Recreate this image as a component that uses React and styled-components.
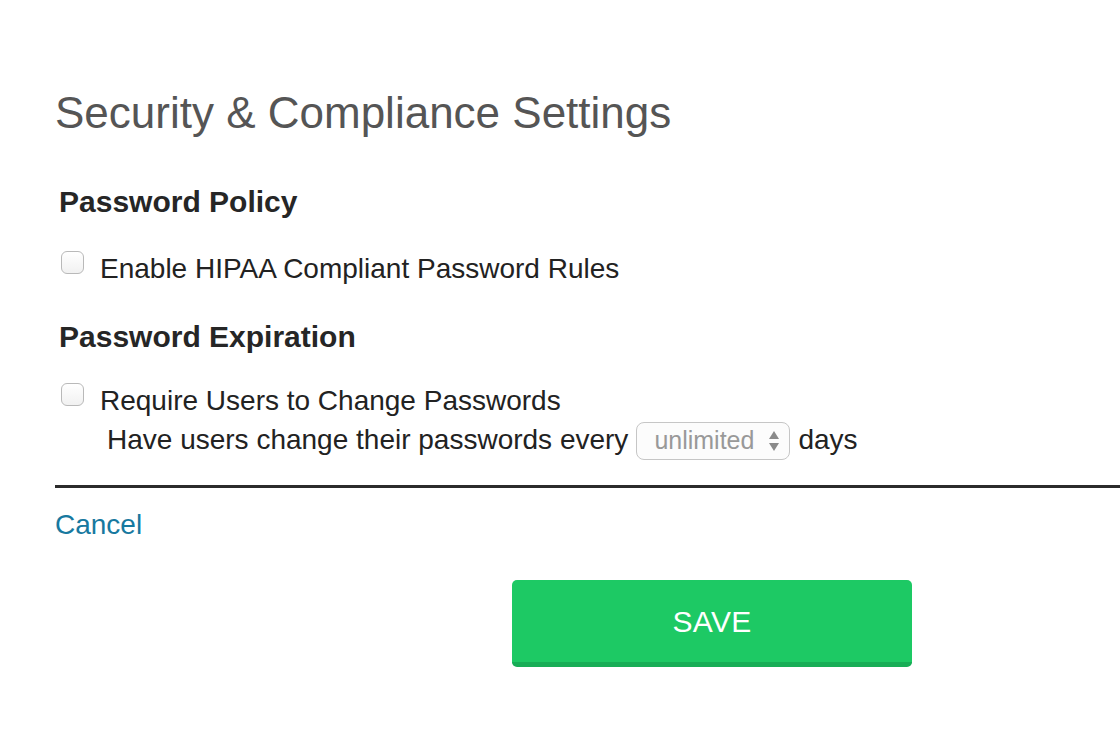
import React, { useState } from "react";
import styled, { createGlobalStyle } from "styled-components";

const GlobalStyle = createGlobalStyle`
    html, body {
        margin: 0;
        padding: 0;
        background: #ffffff;
        font-family: "Liberation Sans", Arial, Helvetica, sans-serif;
        overflow: hidden;
    }
`;

const Page = styled.div`
    width: 100%;
    height: 754px;
    padding-left: 55px;
    box-sizing: border-box;
    display: flex;
    flex-direction: column;
`;

const Title = styled.h1`
    margin: 87px 0 0;
    font-size: 44px;
    line-height: 1.2;
    font-weight: 400;
    color: #555555;
`;

const SectionTitle = styled.h2`
    margin: ${(p) => p.$top}px 0 0;
    padding-left: 4px;
    font-size: 30px;
    line-height: 1.2;
    font-weight: 700;
    color: #262626;
`;

const CheckRow = styled.label`
    margin-top: ${(p) => p.$top}px;
    display: flex;
    align-items: flex-start;
    gap: 16px;
    cursor: pointer;
`;

const Box = styled.input`
    appearance: none;
    -webkit-appearance: none;
    flex: none;
    width: 23px;
    height: 23px;
    margin: -1px 0 0 6px;
    border: 1px solid #b9b9b9;
    border-radius: 6px;
    background: linear-gradient(#ffffff, #f1f1f1);
    box-sizing: border-box;

    &:checked {
        background: #1a7aa0;
        border-color: #1a7aa0;
    }
`;

const Label = styled.span`
    font-size: 28px;
    line-height: 1.2;
    color: #222222;
`;

const EveryRow = styled.div`
    margin-top: 4px;
    padding-left: 52px;
    display: flex;
    align-items: baseline;
    gap: 8px;
    font-size: 28px;
    line-height: 1.2;
    color: #222222;
`;

const SelectWrap = styled.span`
    position: relative;
    display: inline-block;
`;

const Select = styled.select`
    appearance: none;
    -webkit-appearance: none;
    width: 154px;
    height: 38px;
    padding: 0 30px 2px 17px;
    border: 1px solid #c6c6c6;
    border-radius: 8px;
    background: #fcfcfc;
    font-family: "Liberation Sans", Arial, sans-serif;
    font-size: 25px;
    line-height: 34px;
    color: #999999;
    box-sizing: border-box;
    outline: none;

    &:disabled {
        color: #999999;
        opacity: 1;
        background: #fcfcfc;
    }
`;

const Arrows = styled.svg`
    position: absolute;
    right: 10px;
    top: 8px;
    pointer-events: none;
`;

const Divider = styled.hr`
    margin: 25px 0 0;
    border: none;
    height: 3px;
    background: #2b2b2b;
    width: 100%;
`;

const CancelLink = styled.a`
    margin-top: 20px;
    align-self: flex-start;
    font-size: 28px;
    line-height: 1.2;
    color: #17799f;
    text-decoration: none;
    cursor: pointer;
`;

const SaveButton = styled.button`
    margin: 38px 0 0 457px;
    width: 400px;
    height: 87px;
    border: none;
    border-bottom: 5px solid #18ad56;
    border-radius: 5px;
    background: #1dc964;
    color: #ffffff;
    font-family: "Liberation Sans", Arial, sans-serif;
    font-size: 30px;
    letter-spacing: 0.3px;
    cursor: pointer;
    padding: 2px 0 0;
`;

function App() {
    const [hipaa, setHipaa] = useState(false);
    const [expire, setExpire] = useState(false);

    return (
        <>
            <GlobalStyle />
            <Page>
                <Title>Security &amp; Compliance Settings</Title>

                <SectionTitle $top={44}>Password Policy</SectionTitle>
                <CheckRow $top={32}>
                    <Box type="checkbox" checked={hipaa} onChange={() => setHipaa(!hipaa)} />
                    <Label>Enable HIPAA Compliant Password Rules</Label>
                </CheckRow>

                <SectionTitle $top={34}>Password Expiration</SectionTitle>
                <CheckRow $top={29}>
                    <Box type="checkbox" checked={expire} onChange={() => setExpire(!expire)} />
                    <Label>Require Users to Change Passwords</Label>
                </CheckRow>
                <EveryRow>
                    <span>Have users change their passwords every</span>
                    <SelectWrap>
                        <Select defaultValue="unlimited" disabled={!expire}>
                            <option value="unlimited">unlimited</option>
                            <option value="30">30</option>
                            <option value="60">60</option>
                            <option value="90">90</option>
                        </Select>
                        <Arrows width="12" height="22" viewBox="0 0 12 22">
                            <path d="M6 1 L11 9 L1 9 Z" fill="#8a8a8a" />
                            <path d="M6 21 L11 13 L1 13 Z" fill="#8a8a8a" />
                        </Arrows>
                    </SelectWrap>
                    <span>days</span>
                </EveryRow>

                <Divider />
                <CancelLink>Cancel</CancelLink>
                <SaveButton>SAVE</SaveButton>
            </Page>
        </>
    );
}

export default App;
